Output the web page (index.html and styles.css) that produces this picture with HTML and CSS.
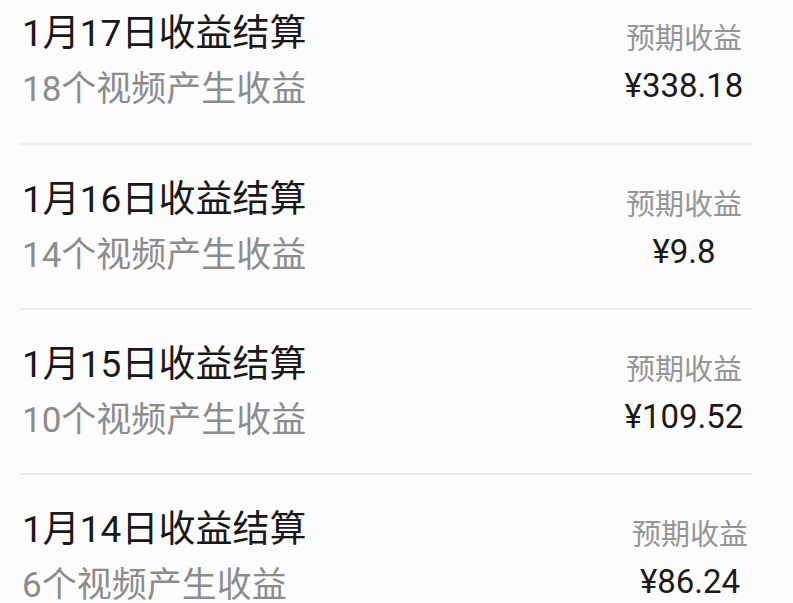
FILE: index.html
```html
<!DOCTYPE html>
<html lang="zh-CN">
<head>
<meta charset="utf-8">
<link rel="stylesheet" href="styles.css">
</head>
<body>
<ul class="list">
  <li class="row row--first">
    <div class="info">
      <div class="title">1月17日收益结算</div>
      <div class="sub">18个视频产生收益</div>
    </div>
    <div class="earn">
      <div class="label">预期收益</div>
      <div class="amount">¥338.18</div>
    </div>
  </li>
  <li class="row">
    <div class="info">
      <div class="title">1月16日收益结算</div>
      <div class="sub">14个视频产生收益</div>
    </div>
    <div class="earn">
      <div class="label">预期收益</div>
      <div class="amount">¥9.8</div>
    </div>
  </li>
  <li class="row">
    <div class="info">
      <div class="title">1月15日收益结算</div>
      <div class="sub">10个视频产生收益</div>
    </div>
    <div class="earn">
      <div class="label">预期收益</div>
      <div class="amount">¥109.52</div>
    </div>
  </li>
  <li class="row row--last">
    <div class="info">
      <div class="title">1月14日收益结算</div>
      <div class="sub">6个视频产生收益</div>
    </div>
    <div class="earn earn--shift">
      <div class="label">预期收益</div>
      <div class="amount">¥86.24</div>
    </div>
  </li>
</ul>
</body>
</html>
```
FILE: styles.css
```css
html, body {
  margin: 0;
  padding: 0;
  background: #fcfcfc;
}
body {
  font-family: "Roboto", "Noto Sans CJK SC", sans-serif;
  overflow: hidden;
}
.list {
  list-style: none;
  margin: 0 0 0 20px;
  padding: 0;
  width: 733px;
}
.row {
  display: flex;
  justify-content: space-between;
  align-items: flex-start;
  height: 165px;
  box-sizing: border-box;
  padding: 32px 0 0 2px;
  border-bottom: 2px solid #ececec;
}
.row--first {
  height: 145px;
  padding-top: 11px;
}
.row--last {
  border-bottom: none;
}
.title {
  font-size: 37px;
  line-height: 46px;
  color: #181818;
}
.sub {
  margin-top: 10px;
  font-size: 35px;
  line-height: 46px;
  color: #8c8c8c;
}
.earn {
  width: 130px;
  margin-right: 4px;
  text-align: center;
  padding-top: 8px;
}
.earn--shift {
  margin-right: -2px;
}
.label {
  font-size: 29px;
  line-height: 40px;
  color: #959595;
}
.amount {
  margin-top: 7px;
  font-size: 33px;
  line-height: 40px;
  color: #1a1a1a;
}
```
